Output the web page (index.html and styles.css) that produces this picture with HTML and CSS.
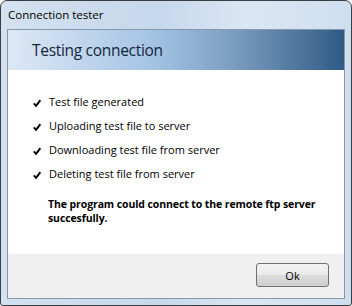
FILE: index.html
```html
<!DOCTYPE html>
<html>
<head>
<meta charset="utf-8">
<link rel="stylesheet" href="styles.css">
</head>
<body>
<div class="window">
  <div class="titlebar">Connection tester</div>
  <div class="client">
    <div class="header">Testing connection</div>
    <div class="content">
      <ul class="steps">
        <li class="step"><svg class="check" width="8" height="8" viewBox="0 0 8 8"><path d="M0.8 4.3 L3 6.9 L7.4 1.2" fill="none" stroke="#000" stroke-width="1.9"/></svg><span>Test file generated</span></li>
        <li class="step"><svg class="check" width="8" height="8" viewBox="0 0 8 8"><path d="M0.8 4.3 L3 6.9 L7.4 1.2" fill="none" stroke="#000" stroke-width="1.9"/></svg><span>Uploading test file to server</span></li>
        <li class="step"><svg class="check" width="8" height="8" viewBox="0 0 8 8"><path d="M0.8 4.3 L3 6.9 L7.4 1.2" fill="none" stroke="#000" stroke-width="1.9"/></svg><span>Downloading test file from server</span></li>
        <li class="step"><svg class="check" width="8" height="8" viewBox="0 0 8 8"><path d="M0.8 4.3 L3 6.9 L7.4 1.2" fill="none" stroke="#000" stroke-width="1.9"/></svg><span>Deleting test file from server</span></li>
      </ul>
      <p class="result">The program could connect to the remote ftp server succesfully.</p>
    </div>
    <div class="footer">
      <button class="btn">Ok</button>
    </div>
  </div>
</div>
</body>
</html>
```
FILE: styles.css
```css
html, body {
  margin: 0;
  padding: 0;
  background: #ffffff;
}
.window {
  width: 352px;
  height: 306px;
  box-sizing: border-box;
  border: 1px solid #3a3d42;
  border-radius: 7px 7px 3px 3px;
  background: linear-gradient(90deg, #d3e1f0 0%, #c6d8ec 45%, #dae6f3 70%, #cfdff0 100%);
  padding: 0 6px 6px 6px;
  display: flex;
  flex-direction: column;
  font-family: "Open Sans", "Noto Sans", sans-serif;
}
.titlebar {
  height: 28px;
  line-height: 28px;
  padding-left: 1px;
  font-size: 11.5px;
  color: #000;
}
.client {
  flex: 1;
  border: 1px solid #8798ad;
  background: #ffffff;
  display: flex;
  flex-direction: column;
}
.header {
  height: 40px;
  line-height: 40px;
  padding-left: 24px;
  font-size: 15.5px;
  letter-spacing: -0.3px;
  color: #14263d;
  background: linear-gradient(90deg, #dde8f5 0%, #a6c5e5 42%, #7fa1c3 65%, #5a7fa5 82%, #2f5a86 100%);
}
.content {
  flex: 1;
  padding: 19px 0 0 25px;
}
.steps {
  list-style: none;
  margin: 0;
  padding: 0;
}
.step {
  height: 24px;
  display: flex;
  align-items: center;
  font-size: 11px;
  color: #000;
}
.check {
  width: 8px;
  height: 8px;
  margin-right: 8px;
  margin-top: 3px;
}
.result {
  margin: 12px 0 0 15px;
  font-size: 10.5px;
  letter-spacing: -0.1px;
  font-weight: bold;
  line-height: 14px;
  width: 285px;
  color: #000;
}
.footer {
  height: 44px;
  box-sizing: border-box;
  background: #f0f0f0;
  display: flex;
  justify-content: flex-end;
  align-items: flex-start;
  padding: 9px 15px 0 0;
}
.btn {
  width: 73px;
  height: 24px;
  box-sizing: border-box;
  border: 1px solid #707070;
  border-radius: 3px;
  background: linear-gradient(180deg, #f2f2f2 0%, #ebebeb 48%, #dddddd 52%, #cfcfcf 100%);
  font-family: "Open Sans", "Noto Sans", sans-serif;
  font-size: 11px;
  color: #000;
  padding: 0;
}
```
